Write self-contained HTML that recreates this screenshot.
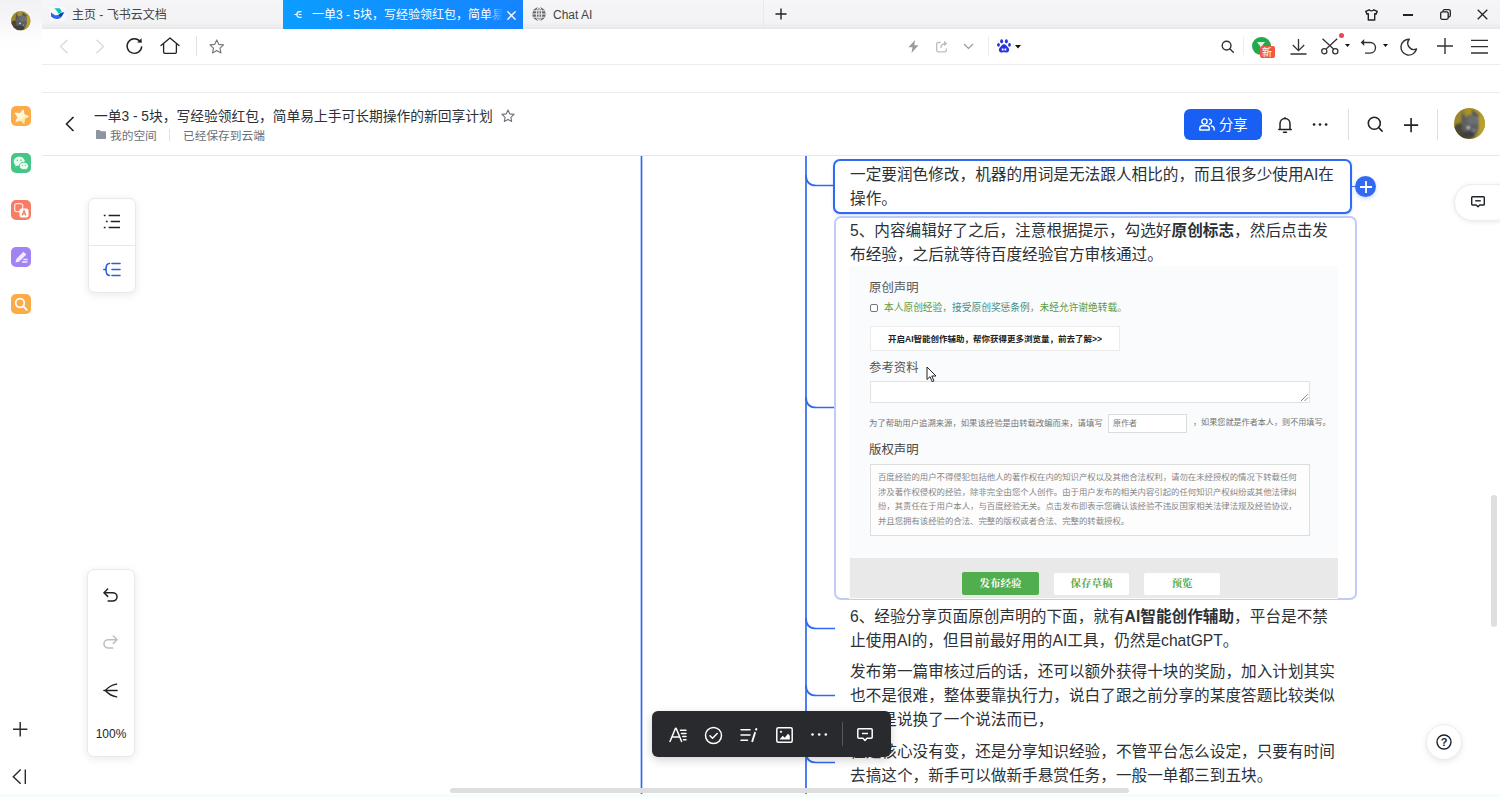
<!DOCTYPE html>
<html lang="zh-CN">
<head>
<meta charset="utf-8">
<title>一单3 - 5块</title>
<style>
*{box-sizing:border-box;margin:0;padding:0}
html,body{width:1500px;height:797px;overflow:hidden;background:#fff}
body{position:relative;font-family:"Liberation Sans","Noto Sans CJK SC",sans-serif;color:#1f2329}
.abs{position:absolute}
svg{position:absolute;overflow:visible}
.t{position:absolute;white-space:nowrap}
/* browser chrome */
#side{left:0;top:0;width:42px;height:797px;background:linear-gradient(180deg,#f2f2f5 0,#f6f6f8 20px,#fdfdfe 38px,#fff 50px)}
#tabbar{left:42px;top:0;width:1458px;height:29px;background:linear-gradient(180deg,#f6f5f7 0,#f2f3f5 22px,#ececee 27px,#e6e6e8 29px)}
#tabact{left:283px;top:0;width:240px;height:29px;background:linear-gradient(90deg,#0c9dff,#1584ff)}
.tabt{font-size:12px;line-height:29px;top:1px;color:#444}
#nav{left:42px;top:29px;width:1458px;height:36px;background:#fff;border-bottom:1px solid #ececec}
#hline1{left:42px;top:92px;width:1458px;height:1px;background:#ececee}
#hline2{left:42px;top:155px;width:1458px;height:1px;background:#e6e7e9}
/* doc */
.para{position:absolute;left:850px;width:500px;font-size:15.65px;line-height:24px;color:#2d3136;letter-spacing:0px;white-space:nowrap}
.para b{font-weight:700}
.card{position:absolute;background:#fff;border-radius:7px;box-shadow:0 2px 8px rgba(31,35,41,.10);border:1px solid #e9e9ea}
</style>
</head>
<body>
<div class="abs" id="side"></div>
<div class="abs" id="tabbar"></div>
<div class="abs" id="tabact"></div>
<div class="abs" id="nav"></div>
<div class="abs" id="hline1"></div>
<div class="abs" id="hline2"></div>

<!-- tabs text -->
<div class="t tabt" style="left:72px">主页 - 飞书云文档</div>
<div class="t tabt" style="left:312px;color:#fff;width:190px;overflow:hidden">一单3 - 5块，写经验领红包，简单易上手</div>
<div class="t tabt" style="left:553px">Chat AI</div>


<!-- left avatar -->
<svg style="left:10.900px;top:10.700px" width="19.600" height="19.600" viewBox="0 0 31 31"><defs><clipPath id="av2"><circle cx="15.500" cy="15.500" r="15.400"/></clipPath><filter id="av2b" x="-10%" y="-10%" width="120%" height="120%"><feGaussianBlur stdDeviation="0.9"/></filter></defs><g clip-path="url(#av2)"><rect width="31" height="31" fill="#a8922b"/><g filter="url(#av2b)"><rect x="0" y="0" width="12" height="31" fill="#9c8a2c"/><rect x="24" y="6" width="8" height="20" fill="#b9a02a"/><ellipse cx="6" cy="24" rx="8" ry="9" fill="#4a4734"/><path d="M8 3l5 9-6 3zM18 1.500l8 6.500-8 4z" fill="#55575b"/><ellipse cx="16.500" cy="18" rx="8.500" ry="11" fill="#5e6064"/><ellipse cx="19" cy="12" rx="6" ry="4.500" fill="#6c6e72"/><ellipse cx="14" cy="27" rx="7" ry="4" fill="#3f3f40"/><circle cx="14.300" cy="19.600" r="1.300" fill="#e6e6dc"/><circle cx="19.800" cy="22.300" r="1" fill="#a5a7a8"/></g></g></svg>
<!-- tab favicons -->
<svg style="left:50px;top:7px" width="15" height="14" viewBox="0 0 15 14"><rect x="0" y="0" width="15" height="14" rx="2" fill="#fafafc"/><path d="M4.200 1.200h5.600c1 1.200 1.700 2.600 2 4-1.200.2-2.300.9-3.200 1.900C7.800 5 6.200 2.800 4.200 1.200z" fill="#00c8b4"/><path d="M1 5.200c2.500 2.700 5.400 3.800 7.800 2.600 1.600-1.700 3.300-2.700 5.600-2.300-1.400 1.200-1.900 3.400-3.500 4.900C8.300 12.700 3.800 12.300 1 9.600z" fill="#2c66f0"/><path d="M8.500 7.900c1.600-1.800 3.500-2.800 5.900-2.400-1.400 1-2 2.600-3 4-1.100-.3-2.100-.8-2.900-1.600z" fill="#123a9e"/></svg>
<svg style="left:294px;top:10px" width="9" height="9" viewBox="0 0 10 10" fill="none" stroke="#fff" stroke-width="1.300" stroke-linecap="round"><path d="M7.800 1.800H6.200C4.300 1.800 3.200 3.100 3.200 5s1.100 3.200 3 3.200h1.600M1 5h2.200M5.600 5h2.200"/></svg>
<div class="abs" style="left:486px;top:0;width:18px;height:29px;background:linear-gradient(90deg,rgba(20,134,255,0),#1486ff)"></div><svg style="left:506.500px;top:10.500px" width="9" height="9" viewBox="0 0 9 9" fill="none" stroke="#fff" stroke-width="1.300" stroke-linecap="round"><path d="M.8.800l7.400 7.400M8.200.8L.8 8.200"/></svg>
<svg style="left:532px;top:7px" width="14" height="14" viewBox="0 0 14 14"><circle cx="7" cy="7" r="6.700" fill="#666"/><g fill="none" stroke="#f3f3f5" stroke-width="1"><ellipse cx="7" cy="7" rx="2.700" ry="6.700"/><path d="M7 .3v13.400M.3 7h13.400M1.300 3.800h11.400M1.300 10.200h11.400"/></g></svg><div class="abs" style="left:763px;top:0;width:1px;height:28px;background:#e9e9eb"></div>
<svg style="left:775px;top:8px" width="12" height="12" viewBox="0 0 12 12" fill="none" stroke="#222" stroke-width="1.400"><path d="M6 .5v11M.5 6h11"/></svg>
<!-- window controls -->
<svg style="left:1365px;top:9px" width="13" height="12" viewBox="0 0 13 12" fill="none" stroke="#222" stroke-width="1.400" stroke-linejoin="round"><path d="M4.200.8C4.800 2.200 8.200 2.200 8.800.8L12.200 2.400 11 5.200 9.700 4.700V11H3.300V4.700L2 5.200.8 2.400z"/></svg>
<div class="abs" style="left:1403px;top:14px;width:10px;height:1.500px;background:#222"></div>
<svg style="left:1440px;top:9px" width="11" height="11" viewBox="0 0 11 11" fill="none" stroke="#222" stroke-width="1.300"><rect x=".7" y="2.800" width="7.500" height="7.500" rx="1.500"/><path d="M3 2.800V2.200C3 1.300 3.600.700 4.500.700h4.300c.9 0 1.500.6 1.500 1.500v4.300c0 .9-.6 1.500-1.500 1.500H8.200"/></svg>
<svg style="left:1477px;top:9px" width="11" height="11" viewBox="0 0 11 11" fill="none" stroke="#222" stroke-width="1.300"><path d="M.7.700l9.600 9.600M10.300.7L.7 10.300"/></svg>
<!-- nav icons -->
<svg style="left:59px;top:39px" width="10" height="15" viewBox="0 0 10 15" fill="none" stroke="#d9d9d9" stroke-width="1.300"><path d="M8.500.7L1.500 7.500l7 6.800"/></svg>
<svg style="left:95px;top:39px" width="10" height="15" viewBox="0 0 10 15" fill="none" stroke="#d9d9d9" stroke-width="1.300"><path d="M1.500.7l7 6.800-7 6.800"/></svg>
<svg style="left:125px;top:37px" width="19" height="19" viewBox="0 0 19 19" fill="none" stroke="#222" stroke-width="1.400"><path d="M15.200 4.600A7.300 7.300 0 1 0 16.700 9.400"/><path d="M12.200 5.600l4.600.2-.3-4.600z" fill="#222" stroke="none"/></svg>
<svg style="left:160px;top:37px" width="20" height="18" viewBox="0 0 20 18" fill="none" stroke="#222" stroke-width="1.300" stroke-linejoin="round" stroke-linecap="round"><path d="M1 8.500L10 1l9 7.500"/><path d="M3.600 6.800v8.300c0 .8.400 1.200 1.200 1.200h10.400c.8 0 1.200-.4 1.200-1.200V6.800"/></svg>
<div class="abs" style="left:196px;top:36px;width:1px;height:20px;background:#e2e2e2"></div>
<svg style="left:209px;top:39px" width="15.500" height="14.500" viewBox="0 0 16 15" fill="none" stroke="#777" stroke-width="1.200" stroke-linejoin="round"><path d="M8 1l2.100 4.500 4.900.6-3.600 3.400.9 4.900L8 12l-4.300 2.400.9-4.900L1 6.100l4.900-.6z"/></svg>
<svg style="left:908px;top:40px" width="11" height="13" viewBox="0 0 11 13"><path d="M7 0L.5 7.200h4L3.500 13l7-7.800H6.300z" fill="#9a9a9a"/></svg>
<svg style="left:936px;top:40px" width="12" height="13" viewBox="0 0 12 13" fill="none" stroke="#bdbdbd" stroke-width="1.300"><path d="M4.500 2.500H2.300C1.300 2.500.7 3.100.700 4.100v6.200c0 1 .6 1.600 1.600 1.600h6.400c1 0 1.600-.6 1.600-1.600V8.500"/><path d="M4.800 8c.2-2.800 2-4.400 5-4.500"/><path d="M8 .8l3.200 2.700L8 6.200z" fill="#bdbdbd" stroke="none"/></svg>
<svg style="left:963px;top:43px" width="11" height="7" viewBox="0 0 11 7" fill="none" stroke="#999" stroke-width="1.200"><path d="M1 1l4.500 4.500L10 1"/></svg>
<div class="abs" style="left:988px;top:36px;width:1px;height:20px;background:#ececec"></div>
<svg style="left:997px;top:39px" width="14" height="14" viewBox="0 0 14 14" fill="#2932e1"><ellipse cx="4.600" cy="2.300" rx="1.500" ry="2.100"/><ellipse cx="9.400" cy="2.300" rx="1.500" ry="2.100"/><ellipse cx="1.500" cy="5.800" rx="1.400" ry="1.900"/><ellipse cx="12.500" cy="5.800" rx="1.400" ry="1.900"/><path d="M7 5.200c1.800 0 2.600 1.600 3.900 3.100 1.300 1.400 1.600 2.700.9 3.900-.7 1.300-2.400 1.400-4.800 1.100-2.400.3-4.100.2-4.800-1.100-.7-1.200-.4-2.500.9-3.900C4.400 6.800 5.200 5.200 7 5.200z"/><path d="M4.800 9.500h1.800v2H4.800zM7.500 9.500h1.800v2H7.500z" fill="#fff"/></svg>
<svg style="left:1014.500px;top:45px" width="6" height="3.500" viewBox="0 0 7 4"><path d="M0 0h7L3.500 4z" fill="#111"/></svg>
<svg style="left:1221px;top:40px" width="13" height="13" viewBox="0 0 13 13" fill="none" stroke="#333" stroke-width="1.400" stroke-linecap="round"><circle cx="5.600" cy="5.600" r="4.400"/><path d="M9 9l3.300 3.300"/></svg>
<div class="abs" style="left:1243px;top:37px;width:1px;height:18px;background:#ededed"></div>
<div class="abs" style="left:1252px;top:36.500px;width:18.500px;height:18.500px;border-radius:50%;background:#22a94b"></div>
<svg style="left:1256px;top:41px" width="10" height="10" viewBox="0 0 10 10"><path d="M1 1h8L6 5v4L4 8V5z" fill="#d9f5e1"/></svg>
<div class="abs" style="left:1260px;top:46px;width:14.500px;height:12px;border-radius:2px;background:#f4573f"></div>
<div class="t" style="left:1262px;top:46.500px;font-size:10px;line-height:11px;color:#fff">新</div>
<svg style="left:1290px;top:39px" width="17" height="16" viewBox="0 0 17 16" fill="none" stroke="#333" stroke-width="1.300"><path d="M8.500 0v11.500M2.800 6l5.700 5.600L14.200 6M.5 15h16"/></svg>
<svg style="left:1321px;top:38px" width="18" height="17" viewBox="0 0 18 17" fill="none" stroke="#333" stroke-width="1.300"><circle cx="3.300" cy="13.300" r="2.600"/><circle cx="14.300" cy="13.300" r="2.600"/><path d="M1.500.7l11.300 10.600M16.200.7L4.900 11.300"/></svg>
<div class="abs" style="left:1338.700px;top:33px;width:5px;height:5px;border-radius:50%;background:#f0424d"></div>
<svg style="left:1345px;top:44px" width="5" height="3" viewBox="0 0 5 3"><path d="M0 0h5L2.500 3z" fill="#111"/></svg>
<svg style="left:1360px;top:38px" width="17" height="17" viewBox="0 0 17 17" fill="none" stroke="#333" stroke-width="1.400"><path d="M2 4.500h8.200c3 0 5.300 2.300 5.300 5.300s-2.300 5.300-5.300 5.300H5"/><path d="M4.200 1L.7 4.500 4.200 8z" fill="#333" stroke="none"/></svg>
<svg style="left:1383px;top:44px" width="5" height="3" viewBox="0 0 5 3"><path d="M0 0h5L2.500 3z" fill="#111"/></svg>
<svg style="left:1400px;top:38px" width="18" height="18" viewBox="0 0 18 18" fill="none" stroke="#333" stroke-width="1.400" stroke-linejoin="round"><path d="M9.300 1.300A7.900 7.900 0 1 0 16.500 11A6.200 6.200 0 0 1 9.300 1.300z"/></svg>
<svg style="left:1437px;top:38px" width="16" height="16" viewBox="0 0 16 16" fill="none" stroke="#333" stroke-width="1.400"><path d="M8 0v16M0 8h16"/></svg>
<svg style="left:1471px;top:39px" width="17" height="15" viewBox="0 0 17 15" fill="none" stroke="#333" stroke-width="1.400"><path d="M0 1.400h17M0 7.600h17M0 14h17"/></svg>

<!-- sidebar icons -->
<div class="abs" style="left:11px;top:106px;width:20px;height:20px;border-radius:5px;background:#fbab48"></div>
<svg style="left:13.500px;top:108.500px" width="15" height="15" viewBox="0 0 14 14"><defs><linearGradient id="sg" x1="0" y1="0" x2="1" y2="1"><stop offset="0" stop-color="#fffdf2"/><stop offset=".55" stop-color="#fff6d8"/><stop offset="1" stop-color="#ffd45a"/></linearGradient></defs><path transform="rotate(14 7 7)" d="M7 .6l2 4.100 4.500.6-3.300 3.100.8 4.500L7 10.800l-4 2.100.8-4.500L.5 5.300l4.500-.6z" fill="url(#sg)" stroke="url(#sg)" stroke-width=".8" stroke-linejoin="round"/></svg>
<div class="abs" style="left:11px;top:153px;width:20px;height:20px;border-radius:5px;background:#44c786"></div>
<svg style="left:13px;top:155.500px" width="16" height="15" viewBox="0 0 16 15"><path d="M6.200.8C3.100.8.700 2.800.700 5.400c0 1.400.7 2.600 1.900 3.500L2.200 10.700l2-1.100c.6.200 1.300.3 2 .3 3.100 0 5.500-2 5.500-4.600S9.300.8 6.200.8z" fill="#e9fcf1"/><path d="M10.900 6.200c-2.600 0-4.600 1.700-4.600 3.800s2 3.800 4.600 3.800c.5 0 1.100-.1 1.600-.2l1.700.9-.4-1.500c1-.7 1.700-1.800 1.700-3 0-2.100-2-3.800-4.600-3.800z" fill="#e9fcf1" stroke="#3ec57e" stroke-width=".9"/><circle cx="4.400" cy="4.200" r=".75" fill="#3ec57e"/><circle cx="8" cy="4.200" r=".75" fill="#3ec57e"/><circle cx="9.500" cy="9.300" r=".6" fill="#3ec57e"/><circle cx="12.300" cy="9.300" r=".6" fill="#3ec57e"/></svg>
<div class="abs" style="left:11px;top:200px;width:20px;height:20px;border-radius:5px;background:#f57d66"></div>
<svg style="left:14px;top:203px" width="15" height="15" viewBox="0 0 15 15"><rect x=".7" y=".7" width="8" height="8" rx="2" fill="none" stroke="#ffe3dc" stroke-width="1.300"/><rect x="5.500" y="5.500" width="9" height="9" rx="2" fill="#fff" /><path d="M8 12.500l2-5 2 5M8.700 11h2.600" stroke="#f4745c" stroke-width="1.100" fill="none"/></svg>
<div class="abs" style="left:11px;top:247px;width:20px;height:20px;border-radius:5px;background:#a084f6"></div>
<svg style="left:14px;top:250px" width="14" height="14" viewBox="0 0 14 14"><path d="M1.500 12.500l.8-3.600L9.500 1.700l2.800 2.800-7.200 7.200z" fill="#f1ebff"/><path d="M8 12h5.500M9.500 9.500h4" stroke="#f1ebff" stroke-width="1.300"/></svg>
<div class="abs" style="left:11px;top:294px;width:20px;height:20px;border-radius:5px;background:#fbab48"></div>
<svg style="left:14px;top:297px" width="14" height="14" viewBox="0 0 14 14" fill="none" stroke="#fff" stroke-width="1.800" stroke-linecap="round"><circle cx="6" cy="6" r="4.300"/><path d="M9.500 9.500l3.300 3.300"/></svg>
<svg style="left:12.900px;top:721.700px" width="14.400" height="14.400" viewBox="0 0 16 16" fill="none" stroke="#2a2a2a" stroke-width="1.600"><path d="M8 0v16M0 8h16"/></svg>
<svg style="left:11px;top:768px" width="17" height="17" viewBox="0 0 17 17" fill="none" stroke="#2a2a2a" stroke-width="1.400"><path d="M9.700 1.600L2.300 8.700l7.400 7M14.300 1.400v14.600"/></svg>

<!-- header -->
<div class="t" style="left:94px;top:106.200px;font-size:13.75px;line-height:22px;color:#2b2f36">一单3 - 5块，写经验领红包，简单易上手可长期操作的新回享计划</div>
<div class="t" style="left:110px;top:126.500px;font-size:11.700px;line-height:18px;color:#6b7079">我的空间</div>
<div class="t" style="left:183px;top:126.500px;font-size:11.700px;line-height:18px;color:#6b7079">已经保存到云端</div>


<!-- share button -->
<div class="abs" style="left:1184px;top:109px;width:78px;height:31px;border-radius:6px;background:#1760f3"></div>
<div class="t" style="left:1219px;top:113.500px;font-size:14.300px;line-height:22px;color:#fff">分享</div>

<!-- header icons -->
<svg style="left:65px;top:116px" width="10" height="16" viewBox="0 0 10 16" fill="none" stroke="#1f2329" stroke-width="1.600"><path d="M8.500 1L1.500 8l7 7"/></svg>
<svg style="left:96px;top:130px" width="10" height="9" viewBox="0 0 10 9"><path d="M0 1C0 .4.400 0 1 0h2.600l1.200 1.200H9c.6 0 1 .4 1 1V8c0 .6-.4 1-1 1H1c-.6 0-1-.4-1-1z" fill="#8f959e"/></svg>
<div class="abs" style="left:169px;top:129px;width:1px;height:12px;background:#dee0e3"></div>
<svg style="left:501px;top:109px" width="14" height="14" viewBox="0 0 14 14" fill="none" stroke="#6b7079" stroke-width="1.100" stroke-linejoin="round"><path d="M7 1l1.800 3.900 4.200.5-3.100 2.900.8 4.200L7 10.400l-3.700 2.100.8-4.200L1 5.400l4.200-.5z"/></svg>
<svg style="left:1199px;top:118px" width="16" height="13" viewBox="0 0 16 13" fill="none" stroke="#fff" stroke-width="1.400" stroke-linecap="round"><circle cx="5.500" cy="3.500" r="2.600"/><path d="M.8 12v-1.500C.8 8.800 2 7.800 3.600 7.800h3.800c1.600 0 2.800 1 2.800 2.700V12z" stroke-linejoin="round"/><path d="M10.500 1.200c1.300.3 2.100 1.200 2.100 2.400s-.8 2.100-2.100 2.400M12.500 8c1.600.3 2.700 1.300 2.700 2.800V12"/></svg>
<svg style="left:1277px;top:116px" width="16" height="18" viewBox="0 0 16 18" fill="none" stroke="#1f2329" stroke-width="1.500" stroke-linecap="round"><path d="M3 13.300V7.800C3 4.700 5.100 2.400 8 2.400s5 2.300 5 5.400v5.500"/><path d="M1.800 13.500h12.400M6.500 16.300h3M8 1.700v.7"/></svg>
<svg style="left:1310px;top:120px" width="20" height="9" viewBox="0 0 20 9" fill="#1f2329"><circle cx="4.100" cy="4.500" r="1.350"/><circle cx="10" cy="4.500" r="1.350"/><circle cx="16.100" cy="4.500" r="1.350"/></svg>
<div class="abs" style="left:1348px;top:109px;width:1px;height:31px;background:#dee0e3"></div>
<svg style="left:1367px;top:116px" width="17" height="17" viewBox="0 0 17 17" fill="none" stroke="#1f2329" stroke-width="1.600" stroke-linecap="round"><circle cx="7.300" cy="7.300" r="6"/><path d="M11.800 11.800l3.300 3.300"/></svg>
<svg style="left:1403.700px;top:117.500px" width="14.200" height="14.200" viewBox="0 0 15 15" fill="none" stroke="#1f2329" stroke-width="1.700"><path d="M7.500 0v15M0 7.500h15"/></svg>
<div class="abs" style="left:1437px;top:109px;width:1px;height:31px;background:#dee0e3"></div>
<svg style="left:1454px;top:108.4px" width="31" height="31" viewBox="0 0 31 31"><defs><clipPath id="av1"><circle cx="15.500" cy="15.500" r="15.400"/></clipPath><filter id="av1b" x="-10%" y="-10%" width="120%" height="120%"><feGaussianBlur stdDeviation="0.9"/></filter></defs><g clip-path="url(#av1)"><rect width="31" height="31" fill="#a8922b"/><g filter="url(#av1b)"><rect x="0" y="0" width="12" height="31" fill="#9c8a2c"/><rect x="24" y="6" width="8" height="20" fill="#b9a02a"/><ellipse cx="6" cy="24" rx="8" ry="9" fill="#4a4734"/><path d="M8 3l5 9-6 3zM18 1.500l8 6.500-8 4z" fill="#55575b"/><ellipse cx="16.500" cy="18" rx="8.500" ry="11" fill="#5e6064"/><ellipse cx="19" cy="12" rx="6" ry="4.500" fill="#6c6e72"/><ellipse cx="14" cy="27" rx="7" ry="4" fill="#3f3f40"/><circle cx="14.300" cy="19.600" r="1.300" fill="#e6e6dc"/><circle cx="19.800" cy="22.300" r="1" fill="#a5a7a8"/></g></g></svg>

<!-- mind map lines -->
<svg style="left:0;top:0" width="1500" height="797" viewBox="0 0 1500 797" fill="none" stroke="#3169f2" stroke-width="1.700">
<path d="M641.500 156V797M806 156V797"/>
<path d="M806 175c0 7 3 10.500 10 10.500H834"/>
<path d="M806 397c0 7 3 10.500 10 10.500H835"/>
<path d="M806 618c0 7 3 10.500 10 10.500H835"/>
<path d="M806 685c0 7 3 10.500 10 10.500H835"/>
<path d="M806 752c0 7 3 10.500 10 10.500H835"/>
</svg>
<!-- nodes -->
<div class="abs" style="left:833px;top:159px;width:519px;height:55px;border:2px solid #3169f2;border-radius:7px;background:#fff;box-shadow:0 1px 2.500px rgba(51,112,255,.28)"></div>
<div class="abs" style="left:833.500px;top:215.500px;width:523.500px;height:384px;border:2px solid #c0cbf8;border-radius:7px;background:#fff"></div>

<div class="para" style="top:162.500px">一定要润色修改，机器的用词是无法跟人相比的，而且很多少使用AI在<br>操作。</div>
<div class="para" style="top:218.500px">5、内容编辑好了之后，注意根据提示，勾选好<b>原创标志</b>，然后点击发<br>布经验，之后就等待百度经验官方审核通过。</div>
<div class="para" style="top:604.500px">6、经验分享页面原创声明的下面，就有<b>AI智能创作辅助</b>，平台是不禁<br>止使用AI的，但目前最好用的AI工具，仍然是chatGPT。</div>
<div class="para" style="top:659.500px">发布第一篇审核过后的话，还可以额外获得十块的奖励，加入计划其实<br>也不是很难，整体要靠执行力，说白了跟之前分享的某度答题比较类似<br>，只是说换了一个说法而已，</div>
<div class="para" style="top:739.500px">但是核心没有变，还是分享知识经验，不管平台怎么设定，只要有时间<br>去搞这个，新手可以做新手悬赏任务，一般一单都三到五块。</div>

<!-- embedded image -->
<div class="abs" style="left:848.500px;top:265.500px;width:489.500px;height:333px;background:#fafbfc"></div>
<div class="abs" id="shot" style="left:850px;top:267px;width:488px;height:331px;background:#fafbfc;overflow:hidden;font-family:'Liberation Sans','Noto Sans CJK SC',sans-serif">
  <div class="t" style="left:19px;top:11.700px;font-size:12.4px;line-height:18px;color:#555">原创声明</div>
  <div class="abs" style="left:20px;top:37px;width:8px;height:8px;border:1px solid #777;border-radius:2px;background:#fff"></div>
  <div class="t" style="left:34px;top:33px;font-size:9.730px;line-height:16px;color:#5b9a45"><span>本人原创经验，</span><span style="color:#3f8f8a">接受原创奖惩条例</span><span>，未经允许谢绝转载。</span></div>
  <div class="abs" style="left:20px;top:59px;width:250px;height:25px;border:1px solid #ebebeb;background:#fff"></div>
  <div class="t" style="left:38px;top:64px;font-size:8.5px;line-height:16px;color:#222;font-weight:700">开启AI智能创作辅助，帮你获得更多浏览量，前去了解&gt;&gt;</div>
  <div class="t" style="left:19px;top:91.600px;font-size:12.4px;line-height:18px;color:#555">参考资料</div>
  <div class="abs" style="left:20px;top:114px;width:440px;height:22px;border:1px solid #e2e2e2;background:#fff"></div>
  <svg style="left:450px;top:126px" width="9" height="9" viewBox="0 0 9 9"><path d="M1 8L8 1M4.5 8L8 4.5" stroke="#888" stroke-width="1" fill="none"/></svg>
  <div class="t" style="left:19px;top:148px;font-size:8.35px;line-height:16px;color:#757575">为了帮助用户追溯来源，如果该经验是由转载改编而来，请填写</div>
  <div class="abs" style="left:258px;top:147px;width:79px;height:19px;border:1px solid #ddd;background:#fff"></div>
  <div class="t" style="left:263px;top:149px;font-size:8px;line-height:16px;color:#777">原作者</div>
  <div class="t" style="left:343px;top:148px;font-size:8.100px;line-height:16px;color:#757575">，如果您就是作者本人，则不用填写。</div>
  <div class="t" style="left:19px;top:173.900px;font-size:12.4px;line-height:18px;color:#444">版权声明</div>
  <div class="abs" style="left:20px;top:197px;width:440px;height:72px;border:1px solid #ddd;background:#fdfdfd"></div>
  <div class="abs" style="left:28px;top:203px;font-size:8.38px;line-height:14.7px;color:#868686;white-space:nowrap">百度经验的用户不得侵犯包括他人的著作权在内的知识产权以及其他合法权利，请勿在未经授权的情况下转载任何<br>涉及著作权侵权的经验，除非完全由您个人创作。由于用户发布的相关内容引起的任何知识产权纠纷或其他法律纠<br>纷，其责任在于用户本人，与百度经验无关。点击发布即表示您确认该经验不违反国家相关法律法规及经验协议，<br>并且您拥有该经验的合法、完整的版权或者合法、完整的转载授权。</div>
  <div class="abs" style="left:0;top:291px;width:488px;height:40px;background:#e9e9e9"></div>
  <div class="abs" style="left:112px;top:304.600px;width:77.400px;height:23.400px;border-radius:2px;background:#50ae4f"></div>
  <div class="abs" style="left:204px;top:305.600px;width:75px;height:22px;border-radius:2px;background:#fff"></div>
  <div class="abs" style="left:294.400px;top:305.600px;width:75.600px;height:22px;border-radius:2px;background:#fff"></div>
  <div class="t" style="left:112px;top:304.600px;width:77px;text-align:center;font-family:'Liberation Serif','Noto Serif CJK SC',serif;font-weight:700;font-size:10.5px;line-height:23px;color:#fff">发布经验</div>
  <div class="t" style="left:204px;top:305.600px;width:75px;text-align:center;font-family:'Liberation Serif','Noto Serif CJK SC',serif;font-weight:700;font-size:10.5px;line-height:22px;color:#55a84a">保存草稿</div>
  <div class="t" style="left:294px;top:305.600px;width:76px;text-align:center;font-family:'Liberation Serif','Noto Serif CJK SC',serif;font-weight:700;font-size:10.5px;line-height:22px;color:#55a84a">预览</div>
</div>
<!-- mouse cursor -->
<svg style="left:926px;top:366px" width="12" height="17" viewBox="0 0 12 17"><path d="M1 1v12.5l3-2.8 2.2 5 1.8-.8-2.2-4.9H10z" fill="#fff" stroke="#222" stroke-width="1" stroke-linejoin="round"/></svg>


<!-- floating cards -->
<div class="card" style="left:87.500px;top:197.500px;width:48.700px;height:95.500px"></div>
<div class="abs" style="left:88px;top:245px;width:48px;height:1px;background:#e8e8e8"></div>
<svg style="left:103px;top:214px" width="18" height="15" viewBox="0 0 18 15" fill="none" stroke="#1f2329" stroke-width="1.600"><path d="M5.600 1.500H17M7.700 7.500H17M5.600 13.500H17"/><path d="M.8 1.500h1.800M2.900 7.500h1.800M.8 13.500h1.800"/></svg>
<svg style="left:103px;top:262px" width="18" height="15" viewBox="0 0 18 15" fill="none" stroke="#2b5de0" stroke-width="1.600" stroke-linecap="round"><path d="M9 1.500h8M9 7.500h8M9 13.500h8"/><path d="M6.500 1.500C4.200 1.500 3 3.500 3 7.500s1.200 6 3.500 6M.8 7.500H3"/></svg>
<div class="card" style="left:87px;top:569px;width:48px;height:188px"></div>
<svg style="left:103.300px;top:587.500px" width="15" height="14" viewBox="0 0 16 15" fill="none" stroke="#1f2329" stroke-width="1.600" stroke-linecap="round" stroke-linejoin="round"><path d="M5 1L1 5l4 4"/><path d="M1.500 5h8.700c2.700 0 4.800 2 4.800 4.500S12.900 14 10.200 14H5.500"/></svg>
<svg style="left:103.300px;top:634.500px" width="15" height="14" viewBox="0 0 16 15" fill="none" stroke="#bbbfc4" stroke-width="1.600" stroke-linecap="round" stroke-linejoin="round"><path d="M11 1l4 4-4 4"/><path d="M14.500 5H5.800C3.100 5 1 7 1 9.500S3.100 14 5.800 14h4.700"/></svg>
<svg style="left:103.300px;top:683.300px" width="15" height="15" viewBox="0 0 16 16" fill="none" stroke="#1f2329" stroke-width="1.600" stroke-linecap="round"><path d="M1 8h14M14.500 1.200C9.500 2 5.500 4.500 2.500 8c3 3.500 7 6 12 6.800"/></svg>
<div class="t" style="left:87px;top:725px;width:48px;text-align:center;font-size:12px;line-height:18px;color:#1f2329">100%</div>

<!-- right widgets -->
<div class="abs" style="left:1454px;top:184px;width:60px;height:37px;border-radius:18.500px;background:#fff;border:1px solid #ececec;box-shadow:0 1px 5px rgba(31,35,41,.1)"></div>
<svg style="left:1471px;top:196px" width="14" height="12" viewBox="0 0 14 12" fill="none" stroke="#1f2329" stroke-width="1.400" stroke-linejoin="round"><path d="M1.500.8h11c.5 0 .8.300.8.800v6.600c0 .5-.3.800-.8.800H8.800L7 10.800 5.200 9H1.500c-.5 0-.8-.3-.8-.8V1.600c0-.5.300-.8.800-.8z"/><path d="M4.200 4.800h5.600"/></svg>
<div class="abs" style="left:1426px;top:724px;width:36px;height:36px;border-radius:50%;background:#fff;border:1px solid #ececec;box-shadow:0 2px 6px rgba(31,35,41,.1)"></div>
<svg style="left:1436px;top:734px" width="16" height="16" viewBox="0 0 16 16" fill="none" stroke="#1f2329" stroke-width="1.400"><circle cx="8" cy="8" r="7"/></svg>
<div class="t" style="left:1436px;top:734px;width:16px;text-align:center;font-size:11px;line-height:16px;font-weight:700;color:#1f2329">?</div>
<div class="abs" style="left:1491px;top:495px;width:6px;height:132px;border-radius:3px;background:#dfdfdf"></div>
<div class="abs" style="left:450px;top:788px;width:679px;height:5px;border-radius:2.500px;background:#dedede"></div>
<div class="abs" style="left:0;top:794px;width:1500px;height:3px;background:#f4fcfd"></div>

<!-- node plus -->
<div class="abs" style="left:1352px;top:185.500px;width:4px;height:1.500px;background:#3169f2"></div>
<div class="abs" style="left:1355px;top:176px;width:21px;height:21px;border-radius:50%;background:#3169f2;box-shadow:0 2px 4px rgba(51,112,255,.25)"></div>
<svg style="left:1359.500px;top:180.500px" width="12" height="12" viewBox="0 0 12 12" fill="none" stroke="#fff" stroke-width="1.800"><path d="M6 0v12M0 6h12"/></svg>

<!-- floating toolbar -->
<div class="abs" style="left:652.300px;top:711.200px;width:239px;height:46px;border-radius:6px;background:#292a2d;box-shadow:0 3px 10px rgba(0,0,0,.18)"></div>
<svg style="left:669px;top:727px" width="19" height="16" viewBox="0 0 19 16" fill="none" stroke="#fff" stroke-width="1.500" stroke-linecap="round" stroke-linejoin="round"><path d="M1 14.500L6.500 1.200h.6L12.600 14.500M3 10h7.600"/><path d="M11.500 3.200H17M12.500 6.400H17M13.800 9.600H17M14.500 12.800H17"/></svg>
<svg style="left:704px;top:725.500px" width="19" height="19" viewBox="0 0 19 19" fill="none" stroke="#fff" stroke-width="1.500" stroke-linecap="round" stroke-linejoin="round"><circle cx="9.500" cy="9.500" r="8"/><path d="M6 9.800l2.500 2.500L13.200 7.500"/></svg>
<svg style="left:740px;top:728px" width="18" height="14" viewBox="0 0 18 14" fill="none" stroke="#fff" stroke-width="1.500" stroke-linecap="round"><path d="M1 1.800h9M1 7h9M1 12.200h6.500"/><path d="M15 4.800L12.300 13.200" stroke-width="1.900"/><path d="M16.300 1L16.100 1.600" stroke-width="2"/></svg>
<svg style="left:775.500px;top:726.500px" width="17" height="16" viewBox="0 0 17 16" fill="none" stroke="#fff" stroke-width="1.500" stroke-linejoin="round"><rect x=".8" y=".8" width="15.400" height="14.400" rx="1.500"/><path d="M3.500 12.500l3.200-3.800 2 2 3.300-4 1.800 2v3.800z" fill="#fff" stroke="none"/><circle cx="5" cy="4.800" r="1.100" fill="#fff" stroke="none"/></svg>
<svg style="left:808px;top:730px" width="22" height="9" viewBox="0 0 22 9" fill="#fff"><circle cx="4.500" cy="4.500" r="1.300"/><circle cx="11.200" cy="4.500" r="1.300"/><circle cx="17.800" cy="4.500" r="1.300"/></svg>
<div class="abs" style="left:841.500px;top:722px;width:1px;height:24px;background:#55575b"></div>
<svg style="left:857px;top:728px" width="16" height="14" viewBox="0 0 16 14" fill="none" stroke="#fff" stroke-width="1.500" stroke-linejoin="round"><path d="M1.800.8h12.400c.6 0 1 .4 1 1v7.400c0 .6-.4 1-1 1H10L8 12.500 6 10.200H1.800c-.6 0-1-.4-1-1V1.800c0-.6.400-1 1-1z"/><path d="M5 5.500h6"/></svg>

</body>
</html>
